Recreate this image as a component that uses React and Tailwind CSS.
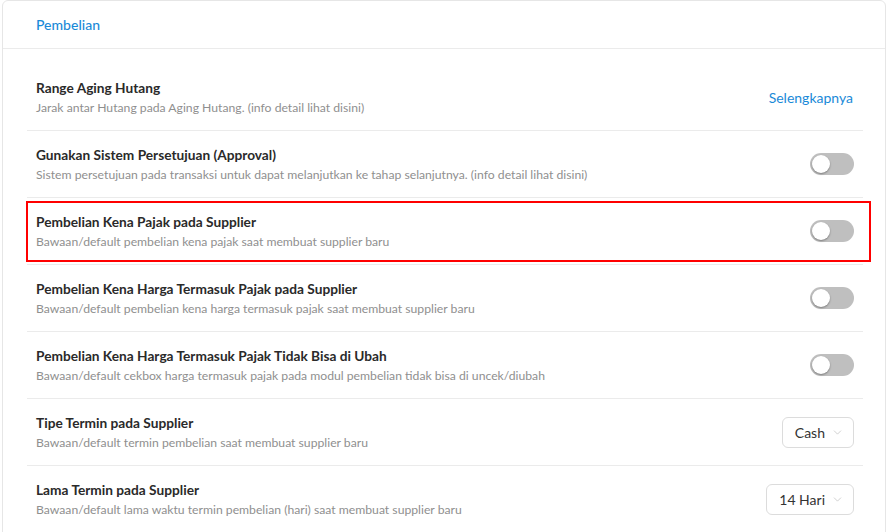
import { ChevronDown } from "lucide-react";

const ROWS = [
  { title: "Range Aging Hutang", desc: "Jarak antar Hutang pada Aging Hutang. (info detail lihat disini)", kind: "link" },
  { title: "Gunakan Sistem Persetujuan (Approval)", desc: "Sistem persetujuan pada transaksi untuk dapat melanjutkan ke tahap selanjutnya. (info detail lihat disini)", kind: "toggle" },
  { title: "Pembelian Kena Pajak pada Supplier", desc: "Bawaan/default pembelian kena pajak saat membuat supplier baru", kind: "toggle", marked: true },
  { title: "Pembelian Kena Harga Termasuk Pajak pada Supplier", desc: "Bawaan/default pembelian kena harga termasuk pajak saat membuat supplier baru", kind: "toggle" },
  { title: "Pembelian Kena Harga Termasuk Pajak Tidak Bisa di Ubah", desc: "Bawaan/default cekbox harga termasuk pajak pada modul pembelian tidak bisa di uncek/diubah", kind: "toggle" },
  { title: "Tipe Termin pada Supplier", desc: "Bawaan/default termin pembelian saat membuat supplier baru", kind: "select", value: "Cash" },
  { title: "Lama Termin pada Supplier", desc: "Bawaan/default lama waktu termin pembelian (hari) saat membuat supplier baru", kind: "select", value: "14 Hari" },
];

function Toggle() {
  return (
    <div className="w-[44px] h-[22px] rounded-full bg-[#bfbfbf] p-[2px] flex items-center">
      <div className="w-[18px] h-[18px] rounded-full bg-white shadow-[0_1px_2px_rgba(0,0,0,0.35)]" />
    </div>
  );
}

function Select({ value }) {
  return (
    <div className="h-[31px] pl-[12px] pr-[9px] flex items-center gap-[6px] border border-[#dcdcdc] rounded-md text-[14px] text-[#333]">
      <span>{value}</span>
      <ChevronDown size={13} strokeWidth={1.25} className="text-[#bbb]" />
    </div>
  );
}

export default function App() {
  return (
    <div className="w-[888px] h-[532px] bg-white overflow-hidden pl-[2px] pr-[2px]" style={{ fontFamily: "Lato, 'Noto Sans', sans-serif" }}>
      <div className="border border-[#e6e6e6] rounded-t-md h-[540px]">
        <div className="h-[48px] px-[33px] flex items-center border-b border-[#ebebeb]">
          <span className="text-[14px] font-medium text-[#1a8ad8]">Pembelian</span>
        </div>
        <div className="pt-[15px] pl-[24px] pr-[22px]">
          {ROWS.map((r) => (
            <div key={r.title} className="relative h-[67px] border-b border-[#ebebeb] flex items-center justify-between pl-[9px] pr-[9px]">
              <div>
                <p className="text-[13.7px] font-bold text-[#2a2a2a] leading-[20px]">{r.title}</p>
                <p className="text-[12.2px] text-[#8f8f8f] leading-[18px] mt-[1px]">{r.desc}</p>
              </div>
              {r.kind === "link" && <span className="text-[14px] text-[#1a8ad8] mr-[1px]">Selengkapnya</span>}
              {r.kind === "toggle" && <Toggle />}
              {r.kind === "select" && <Select value={r.value} />}
              {r.marked && <div className="absolute left-[-1px] right-[-8px] top-[3px] bottom-[2px] border-[2.5px] border-[#ff0000] pointer-events-none" />}
            </div>
          ))}
        </div>
      </div>
    </div>
  );
}
